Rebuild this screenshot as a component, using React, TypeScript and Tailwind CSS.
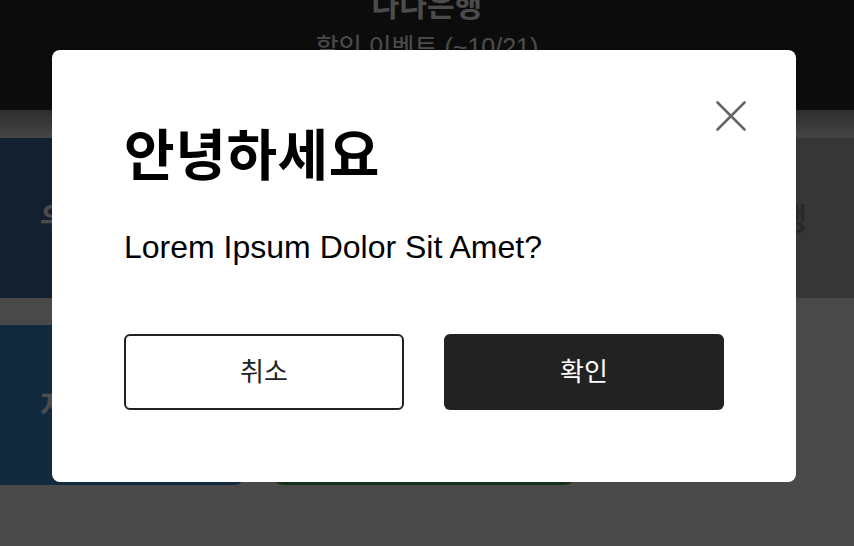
const font = "font-['Liberation_Sans','Noto_Sans_CJK_KR',sans-serif]";

export default function App() {
  return (
    <div className={`relative h-[546px] w-[854px] overflow-hidden bg-[#f3f3f3] ${font}`}>
      {/* Page behind the dialog */}
      <header className="flex h-[110px] flex-col items-center bg-[#282828] text-white">
        <h1 className="-mt-[14px] text-[30px] font-bold leading-[40px]">나나은행</h1>
        <p className="mt-[6px] text-[25px] leading-[30px]">할인 이벤트 (~10/21)</p>
      </header>
      <div className="h-[28px] bg-gradient-to-b from-[#999999] to-[#e8e8e8]" />

      <div className="flex h-[160px] gap-[25px]">
        <div className="flex w-[415px] items-center bg-[#3c6b9d] pl-[40px] text-[30px] font-bold text-white">
          우리은행 이벤트
        </div>
        <div className="flex flex-1 items-center justify-end bg-[#b4b4b4] pr-[47px] text-[30px] font-bold text-[#8a8a8a]">
          국민은행
        </div>
      </div>

      <div className="mt-[27px] flex h-[160px] gap-[28px]">
        <div className="flex w-[245px] items-center rounded-br-[10px] bg-[#3f8ccf] pl-[40px] text-[30px] font-bold text-white">
          지금 가입
        </div>
        <div className="flex w-[302px] items-center justify-center rounded-[10px] bg-[#4da057] text-[30px] font-bold text-white">
          혜택 보기
        </div>
      </div>

      {/* Dim overlay + dialog */}
      <div className="absolute inset-0 bg-black/70 pl-[52px] pt-[50px]">
        <div className="relative flex h-[432px] w-[744px] flex-col rounded-[8px] bg-white px-[72px] pb-[72px] pt-[73px]">
          <button className="absolute left-[663px] top-[50px] text-[#666666]" aria-label="닫기">
            <svg width="32" height="32" viewBox="0 0 32 32" fill="none" stroke="currentColor" strokeWidth="2.6" strokeLinecap="round">
              <path d="M2.5 2.5 L29.5 29.5 M29.5 2.5 L2.5 29.5" />
            </svg>
          </button>
          <h2 className="text-[55px] font-bold leading-[66px] tracking-[0.6px] text-black">안녕하세요</h2>
          <p className="mt-[38px] text-[32px] leading-[40px] text-black">Lorem Ipsum Dolor Sit Amet?</p>
          <div className="mt-auto flex gap-[40px]">
            <button className="h-[76px] w-[280px] rounded-[6px] border-2 border-[#222222] bg-white text-[26px] text-[#222222]">
              취소
            </button>
            <button className="h-[76px] w-[280px] rounded-[6px] bg-[#222222] text-[26px] text-white">
              확인
            </button>
          </div>
        </div>
      </div>
    </div>
  );
}
